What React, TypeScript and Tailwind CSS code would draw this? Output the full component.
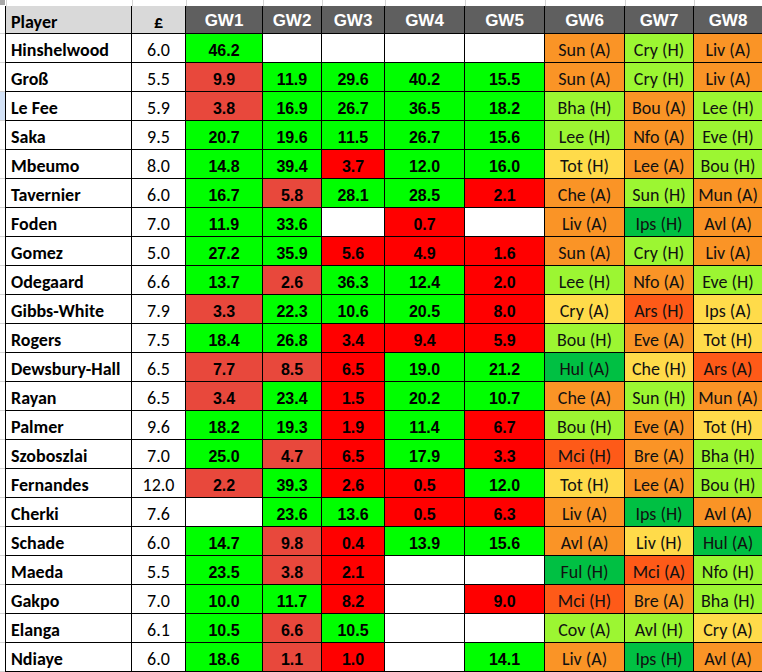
import React from "react";

type Fx = [string, "O" | "L" | "D" | "R" | "Y"];
type Row = [string, string, (string | null)[], Fx[]];

const rows: Row[] = [
  ["Hinshelwood", "6.0", ["46.2", null, null, null, null], [["Sun (A)", "O"], ["Cry (H)", "L"], ["Liv (A)", "O"]]],
  ["Groß", "5.5", ["9.9", "11.9", "29.6", "40.2", "15.5"], [["Sun (A)", "O"], ["Cry (H)", "L"], ["Liv (A)", "O"]]],
  ["Le Fee", "5.9", ["3.8", "16.9", "26.7", "36.5", "18.2"], [["Bha (H)", "L"], ["Bou (A)", "O"], ["Lee (H)", "L"]]],
  ["Saka", "9.5", ["20.7", "19.6", "11.5", "26.7", "15.6"], [["Lee (H)", "L"], ["Nfo (A)", "O"], ["Eve (H)", "L"]]],
  ["Mbeumo", "8.0", ["14.8", "39.4", "3.7", "12.0", "16.0"], [["Tot (H)", "Y"], ["Lee (A)", "O"], ["Bou (H)", "L"]]],
  ["Tavernier", "6.0", ["16.7", "5.8", "28.1", "28.5", "2.1"], [["Che (A)", "O"], ["Sun (H)", "L"], ["Mun (A)", "O"]]],
  ["Foden", "7.0", ["11.9", "33.6", null, "0.7", null], [["Liv (A)", "O"], ["Ips (H)", "D"], ["Avl (A)", "O"]]],
  ["Gomez", "5.0", ["27.2", "35.9", "5.6", "4.9", "1.6"], [["Sun (A)", "O"], ["Cry (H)", "L"], ["Liv (A)", "O"]]],
  ["Odegaard", "6.6", ["13.7", "2.6", "36.3", "12.4", "2.0"], [["Lee (H)", "L"], ["Nfo (A)", "O"], ["Eve (H)", "L"]]],
  ["Gibbs-White", "7.9", ["3.3", "22.3", "10.6", "20.5", "8.0"], [["Cry (A)", "Y"], ["Ars (H)", "R"], ["Ips (A)", "Y"]]],
  ["Rogers", "7.5", ["18.4", "26.8", "3.4", "9.4", "5.9"], [["Bou (H)", "L"], ["Eve (A)", "O"], ["Tot (H)", "Y"]]],
  ["Dewsbury-Hall", "6.5", ["7.7", "8.5", "6.5", "19.0", "21.2"], [["Hul (A)", "D"], ["Che (H)", "Y"], ["Ars (A)", "R"]]],
  ["Rayan", "6.5", ["3.4", "23.4", "1.5", "20.2", "10.7"], [["Che (A)", "O"], ["Sun (H)", "L"], ["Mun (A)", "O"]]],
  ["Palmer", "9.6", ["18.2", "19.3", "1.9", "11.4", "6.7"], [["Bou (H)", "L"], ["Eve (A)", "O"], ["Tot (H)", "Y"]]],
  ["Szoboszlai", "7.0", ["25.0", "4.7", "6.5", "17.9", "3.3"], [["Mci (H)", "R"], ["Bre (A)", "O"], ["Bha (H)", "L"]]],
  ["Fernandes", "12.0", ["2.2", "39.3", "2.6", "0.5", "12.0"], [["Tot (H)", "Y"], ["Lee (A)", "O"], ["Bou (H)", "L"]]],
  ["Cherki", "7.6", [null, "23.6", "13.6", "0.5", "6.3"], [["Liv (A)", "O"], ["Ips (H)", "D"], ["Avl (A)", "O"]]],
  ["Schade", "6.0", ["14.7", "9.8", "0.4", "13.9", "15.6"], [["Avl (A)", "O"], ["Liv (H)", "Y"], ["Hul (A)", "D"]]],
  ["Maeda", "5.5", ["23.5", "3.8", "2.1", null, null], [["Ful (H)", "D"], ["Mci (A)", "R"], ["Nfo (H)", "L"]]],
  ["Gakpo", "7.0", ["10.0", "11.7", "8.2", null, "9.0"], [["Mci (H)", "R"], ["Bre (A)", "O"], ["Bha (H)", "L"]]],
  ["Elanga", "6.1", ["10.5", "6.6", "10.5", null, null], [["Cov (A)", "L"], ["Avl (H)", "L"], ["Cry (A)", "Y"]]],
  ["Ndiaye", "6.0", ["18.6", "1.1", "1.0", null, "14.1"], [["Liv (A)", "O"], ["Ips (H)", "D"], ["Avl (A)", "O"]]],
];

const fxBg: Record<string, string> = {
  O: "bg-[#fa9426]",
  L: "bg-[#9cf632]",
  D: "bg-[#00c043]",
  R: "bg-[#fe5a18]",
  Y: "bg-[#ffdb4a]",
};

const calibri = "font-['Carlito','Lato',sans-serif]";
const arial = "font-['Liberation_Sans','Arial',sans-serif]";

function numBg(v: string | null, i: number) {
  if (v === null) return "bg-white";
  if (parseFloat(v) >= 10) return "bg-[#00ff00]";
  return i < 2 ? "bg-[#e8483c]" : "bg-[#ff0000]";
}

const colLines = [6, 132, 186, 263, 322, 385, 465, 545, 625, 694];

export default function App() {
  return (
    <div className="w-[762px] h-[672px] overflow-hidden bg-white relative">
      <div className="h-[6px] relative">
        <div className="w-[5px] h-[5px] bg-[#a8a8a8]" />
        {colLines.map((x) => (
          <div key={x} className="absolute top-0 h-[6px] w-px bg-[#d4d4d4]" style={{ left: x }} />
        ))}
      </div>
      <div className="flex">
        <div className="w-[6px] flex flex-col gap-px bg-[#d4d4d4]">
          <div className="h-[27px] bg-white" />
          {rows.map((r, i) => (
            <div key={r[0]} className={`h-[28px] ${i === 2 ? "bg-[#d3e2f7]" : "bg-white"}`} />
          ))}
        </div>
        <div className="grid grid-cols-[125px_53px_76px_58px_62px_79px_79px_79px_68px_68px] grid-rows-[27px] auto-rows-[28px] gap-px bg-black pl-px pb-px">
          <div className={`bg-[#d9d9d9] flex items-center pt-[5px] pl-[5px] font-bold text-[18px] text-black ${calibri}`}>Player</div>
          <div className={`bg-[#d9d9d9] flex items-center justify-center pt-[5px] font-bold text-[18px] text-black ${calibri}`}>£</div>
          {["GW1", "GW2", "GW3", "GW4", "GW5", "GW6", "GW7", "GW8"].map((g) => (
            <div key={g} className={`bg-[#5f5f5f] flex items-center justify-center pt-[3px] font-bold text-[17px] text-white ${arial}`}>
              {g}
            </div>
          ))}
          {rows.map((r) => (
            <React.Fragment key={r[0]}>
              <div className={`bg-white flex items-center pt-[5px] pl-[5px] font-bold text-[18px] text-black whitespace-nowrap ${calibri}`}>{r[0]}</div>
              <div className={`bg-white flex items-center justify-center pt-[5px] text-[18px] text-black ${calibri}`}>{r[1]}</div>
              {r[2].map((v, i) => (
                <div key={i} className={`${numBg(v, i)} flex items-center justify-center pt-[5px] font-bold text-[16px] text-black ${arial}`}>
                  {v ?? ""}
                </div>
              ))}
              {r[3].map(([t, c], i) => (
                <div key={i} className={`${fxBg[c]} flex items-center justify-center pt-[5px] text-[18px] text-[#111] whitespace-nowrap ${calibri}`}>
                  {t}
                </div>
              ))}
            </React.Fragment>
          ))}
        </div>
      </div>
    </div>
  );
}
